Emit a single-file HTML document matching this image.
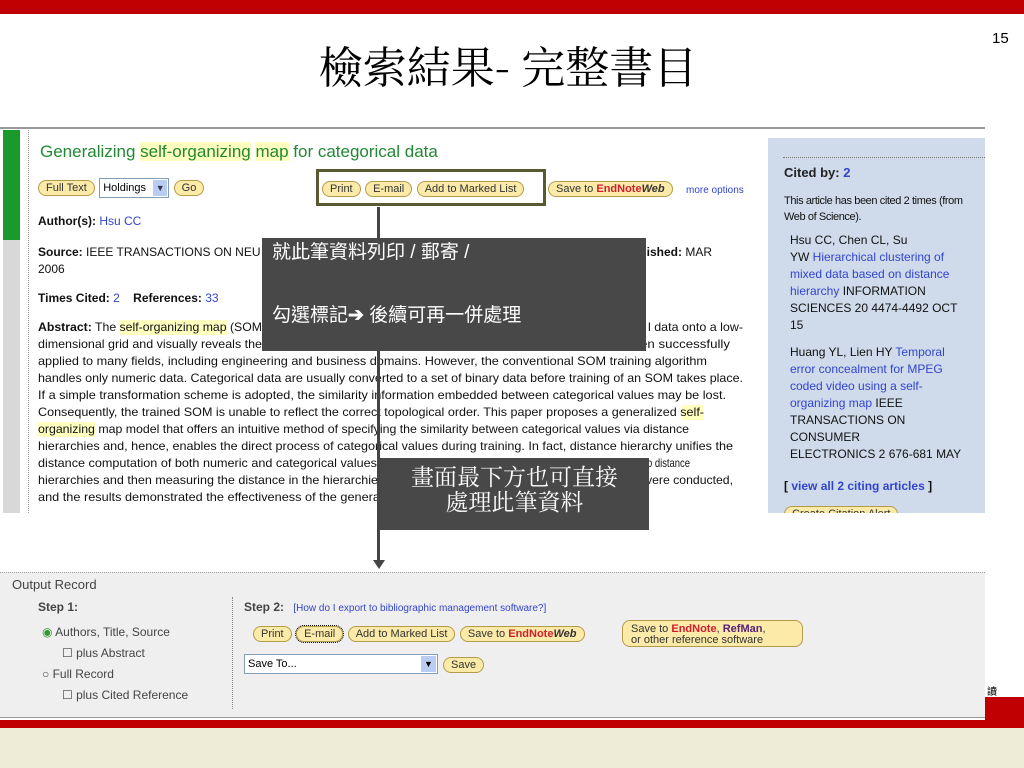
<!DOCTYPE html>
<html><head><meta charset="utf-8"><style>
*{margin:0;padding:0;box-sizing:border-box}
body{width:1024px;height:768px;position:relative;background:#fff;font-family:"Liberation Sans",Arial,sans-serif;overflow:hidden}
.abs{position:absolute}
.btn{display:inline-block;border:1px solid #b59a4a;border-radius:9px;background:#fbeaa8;font-size:11px;padding:0 7px;height:16px;line-height:14px;color:#333;vertical-align:middle;white-space:nowrap}
.hl{background:#ffffc0}
.lk{color:#3344cc}
.sm{font-size:12px;line-height:17px;color:#111;white-space:nowrap}
.box{background:#484848;color:#fff;font-family:"Liberation Sans","Noto Sans CJK TC",sans-serif}
.rp{font-size:12px;line-height:17px;color:#111;white-space:nowrap}
</style></head><body>
<div class="abs" style="left:0;top:0;width:1024px;height:14px;background:#c00000"></div>
<div class="abs" style="left:0;top:32px;width:1024px;text-align:center;font-family:'Noto Serif CJK TC','Noto Serif CJK SC','Liberation Serif',serif;font-size:44px;line-height:64px;color:#000;padding-right:8px">檢索結果- 完整書目</div>
<div class="abs" style="left:992px;top:30px;font-size:15px">15</div>

<div class="abs" style="left:0;top:127px;width:985px;height:386px;background:#fff;border-top:2px solid #999"></div>
<div class="abs" style="left:3px;top:130px;width:17px;height:110px;background:#1a9a2a"></div>
<div class="abs" style="left:3px;top:240px;width:17px;height:273px;background:#d8d8d8"></div>
<div class="abs" style="left:28px;top:130px;height:383px;border-left:1px dotted #999"></div>
<div class="abs" style="left:40px;top:142px;font-size:17px;color:#228833;white-space:nowrap">Generalizing <span class="hl">self-organizing</span> <span class="hl">map</span> for categorical data</div>
<div class="abs" style="left:38px;top:178px;white-space:nowrap"><span class="btn">Full Text</span> <span style="display:inline-block;position:relative;width:70px;height:20px;border:1px solid #7f9db9;font-size:11px;line-height:18px;padding-left:3px;vertical-align:middle">Holdings <span style="position:absolute;right:1px;top:1px;width:14px;height:16px;background:#b9cdf3;color:#335;font-size:9px;text-align:center;line-height:16px">▼</span></span> <span class="btn">Go</span></div>
<div class="abs" style="left:322px;top:180px;white-space:nowrap"><span class="btn">Print</span> <span class="btn">E-mail</span> <span class="btn">Add to Marked List</span></div>
<div class="abs" style="left:548px;top:180px"><span class="btn">Save to <b style="color:#d02030">EndNote</b><b><i>Web</i></b></span></div>
<div class="abs" style="left:686px;top:185px;font-size:10px;color:#3344cc;white-space:nowrap">more options</div>
<div class="abs" style="left:316px;top:169px;width:230px;height:37px;border:3px solid #5a5a32"></div>
<div class="abs sm" style="left:38px;top:213px"><b>Author(s):</b> <span class="lk">Hsu CC</span></div>
<div class="abs sm" style="left:38px;top:244px"><b>Source:</b> IEEE TRANSACTIONS ON NEU</div>
<div class="abs sm" style="left:636px;top:244px"><b>blished:</b> MAR</div>
<div class="abs sm" style="left:38px;top:261px">2006</div>
<div class="abs sm" style="left:38px;top:290px"><b>Times Cited:</b> <span class="lk">2</span> &nbsp;&nbsp; <b>References:</b> <span class="lk">33</span></div>

<svg class="abs" style="left:0;top:0" width="1024" height="768" font-family="Liberation Sans, Arial, sans-serif" font-size="12" fill="#111">
<rect x="119" y="320" width="108" height="15" fill="#ffffc0"/>
<rect x="681" y="405" width="23" height="15" fill="#ffffc0"/>
<rect x="38" y="422" width="58" height="15" fill="#ffffc0"/>
<text x="38" y="331" textLength="224" lengthAdjust="spacingAndGlyphs"><tspan font-weight="bold">Abstract:</tspan> The self-organizing map (SOM</text>
<text x="648" y="331" textLength="95" lengthAdjust="spacingAndGlyphs">l data onto a low-</text>
<text x="38" y="348" textLength="224" lengthAdjust="spacingAndGlyphs">dimensional grid and visually reveals the</text>
<text x="640" y="348" textLength="90" lengthAdjust="spacingAndGlyphs">en successfully</text>
<text x="38" y="365" textLength="669" lengthAdjust="spacingAndGlyphs">applied to many fields, including engineering and business domains. However, the conventional SOM training algorithm</text>
<text x="38" y="382" textLength="705" lengthAdjust="spacingAndGlyphs">handles only numeric data. Categorical data are usually converted to a set of binary data before training of an SOM takes place.</text>
<text x="38" y="399" textLength="688" lengthAdjust="spacingAndGlyphs">If a simple transformation scheme is adopted, the similarity information embedded between categorical values may be lost.</text>
<text x="38" y="416" textLength="666" lengthAdjust="spacingAndGlyphs">Consequently, the trained SOM is unable to reflect the correct topological order. This paper proposes a generalized self-</text>
<text x="38" y="433" textLength="651" lengthAdjust="spacingAndGlyphs">organizing map model that offers an intuitive method of specifying the similarity between categorical values via distance</text>
<text x="38" y="450" textLength="695" lengthAdjust="spacingAndGlyphs">hierarchies and, hence, enables the direct process of categorical values during training. In fact, distance hierarchy unifies the</text>
<text x="38" y="467" textLength="339" lengthAdjust="spacingAndGlyphs">distance computation of both numeric and categorical values</text>
<text x="647" y="467" textLength="43" lengthAdjust="spacingAndGlyphs">o distance</text>
<text x="38" y="484" textLength="340" lengthAdjust="spacingAndGlyphs">hierarchies and then measuring the distance in the hierarchie</text>
<text x="646" y="484" textLength="87" lengthAdjust="spacingAndGlyphs">vere conducted,</text>
<text x="38" y="501" textLength="342" lengthAdjust="spacingAndGlyphs">and the results demonstrated the effectiveness of the genera</text>
</svg>

<div class="abs" style="left:768px;top:138px;width:217px;height:375px;background:#cfdbeb;overflow:hidden">
<div class="abs" style="left:15px;top:19px;width:202px;border-top:1px dotted #777"></div>
<div class="abs" style="left:16px;top:27px;font-size:13px;font-weight:bold;color:#222">Cited by: <span class="lk">2</span></div>
<div class="abs" style="left:16px;top:55px;font-size:11px;line-height:16px;color:#111;letter-spacing:-0.4px;white-space:nowrap">This article has been cited 2 times (from<br>Web of Science).</div>
<div class="abs rp" style="left:22px;top:94px">Hsu CC, Chen CL, Su<br>YW <span class="lk">Hierarchical clustering of</span><br><span class="lk">mixed data based on distance</span><br><span class="lk">hierarchy</span> INFORMATION<br>SCIENCES 20 4474-4492 OCT<br>15</div>
<div class="abs rp" style="left:22px;top:206px">Huang YL, Lien HY <span class="lk">Temporal</span><br><span class="lk">error concealment for MPEG</span><br><span class="lk">coded video using a self-</span><br><span class="lk">organizing map</span> IEEE<br>TRANSACTIONS ON<br>CONSUMER<br>ELECTRONICS 2 676-681 MAY</div>
<div class="abs" style="left:16px;top:341px;font-size:12px;font-weight:bold;color:#111;white-space:nowrap">[ <span class="lk">view all 2 citing articles</span> ]</div>
<div class="abs" style="left:16px;top:367px"><span class="btn">Create Citation Alert</span></div>
</div>

<div class="abs" style="left:377px;top:207px;width:3px;height:355px;background:#444"></div>
<div class="abs" style="left:373px;top:560px;width:0;height:0;border-left:6px solid transparent;border-right:6px solid transparent;border-top:9px solid #444"></div>
<div class="abs box" style="left:262px;top:238px;width:384px;height:113px;font-size:19px;line-height:24px;white-space:nowrap">
<div class="abs" style="left:10px;top:3px">就此筆資料列印 / 郵寄 /</div>
<div class="abs" style="left:10px;top:66px">勾選標記<b>➔</b> 後續可再一併處理</div></div>
<div class="abs box" style="left:380px;top:458px;width:269px;height:72px;font-size:23px;line-height:25px;text-align:center;padding-top:5px;font-family:'Noto Serif CJK TC','Noto Serif CJK SC','Liberation Serif',serif">畫面最下方也可直接<br>處理此筆資料</div>

<div class="abs" style="left:0;top:697px;width:1024px;height:31px;background:#c00000"></div>
<div class="abs" style="left:0;top:728px;width:1024px;height:40px;background:#eeebd6"></div>
<div class="abs" style="left:987px;top:683px;font-size:10px;font-family:'Noto Sans CJK TC',sans-serif">讀</div>
<div class="abs" style="left:0;top:572px;width:985px;height:148px;background:#efefef;border-top:1px dotted #999;border-bottom:3px double #999"></div>
<div class="abs" style="left:0;top:718px;width:985px;height:2px;background:#fff"></div>
<div class="abs" style="left:12px;top:577px;font-size:13px;color:#444;white-space:nowrap">Output Record</div>
<div class="abs" style="left:38px;top:600px;font-size:12px;font-weight:bold;color:#444">Step 1:</div>
<div class="abs" style="left:42px;top:622px;font-size:12px;line-height:21px;color:#444;white-space:nowrap">
<div><span style="color:#393">◉</span> Authors, Title, Source</div><div style="padding-left:20px">☐ plus Abstract</div><div>○ Full Record</div><div style="padding-left:20px">☐ plus Cited Reference</div></div>
<div class="abs" style="left:232px;top:597px;height:112px;border-left:1px dotted #888"></div>
<div class="abs" style="left:244px;top:600px;font-size:12px;font-weight:bold;color:#444;white-space:nowrap">Step 2: <span style="font-weight:normal;font-size:10px;color:#3344cc;margin-left:6px">[How do I export to bibliographic management software?]</span></div>
<div class="abs" style="left:253px;top:625px;white-space:nowrap"><span class="btn">Print</span> <span class="btn" style="outline:1px dotted #000">E-mail</span> <span class="btn">Add to Marked List</span> <span class="btn">Save to <b style="color:#d02030">EndNote</b><b><i>Web</i></b></span></div>
<div class="abs" style="left:622px;top:620px;width:181px;height:27px;border:1px solid #b59a4a;border-radius:8px;background:#fbeaa8;font-size:11px;line-height:11px;padding:3px 8px;color:#333;white-space:nowrap">Save to <b style="color:#d02030">EndNote</b>, <b style="color:#552277">RefMan</b>,<br>or other reference software</div>
<div class="abs" style="left:244px;top:654px;width:194px;height:20px;background:#fff;border:1px solid #7f9db9;font-size:11px;line-height:18px;padding-left:3px">Save To...<span style="position:absolute;right:1px;top:1px;width:15px;height:16px;background:#b9cdf3;font-size:9px;text-align:center;line-height:16px">▼</span></div>
<div class="abs" style="left:443px;top:656px"><span class="btn">Save</span></div>
</body></html>
